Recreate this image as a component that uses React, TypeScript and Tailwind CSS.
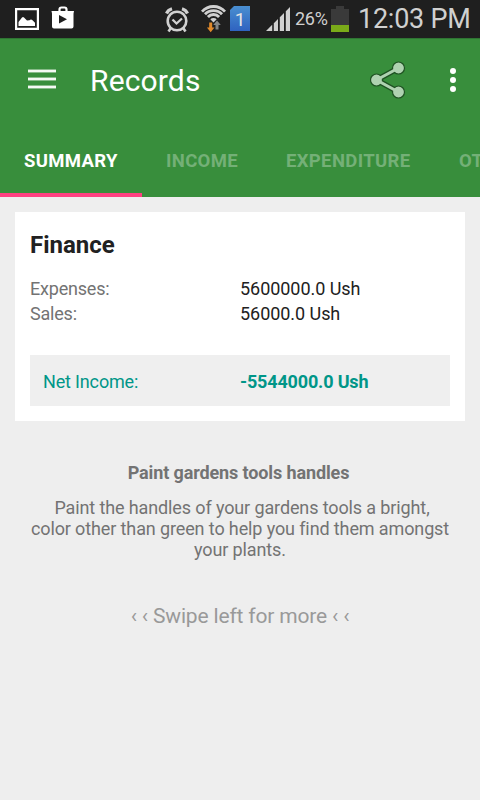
import React from 'react'
import clsx from 'clsx'

const tabs = [
    { name: 'SUMMARY', width: 'w-[142px]', current: true },
    { name: 'INCOME', width: 'w-[120px]', current: false },
    { name: 'EXPENDITURE', width: 'w-[173px]', current: false },
    { name: 'OTHER', width: 'w-[110px]', current: false },
]

const records = [
    { label: 'Expenses:', value: '5600000.0 Ush' },
    { label: 'Sales:', value: '56000.0 Ush' },
]

const StatusBar = () => {
    return (
        <div className="flex h-[38px] w-full shrink-0 items-start bg-[#1f1f1f] text-[#d0d0d0]">
            {/* notifications */}
            <svg className="mt-2 ml-[15px] shrink-0" width="24" height="22" viewBox="0 0 24 22">
                <path d="M1.1 1.1h21.8v19.8H1.1z" fill="none" stroke="#fff" strokeWidth="2.2" />
                <path d="M3.500 18v-4l3.500-4.500q1-.8 2 0l3 3 2.500-.2q1.500-1.500 3 0l2.500 2.500V18z" fill="#fff" />
            </svg>
            <svg className="mt-[5px] ml-[12px] shrink-0" width="25" height="25" viewBox="0 0 25 25">
                <path d="M8.500 7V4.500a2 2 0 0 1 2-2h3a2 2 0 0 1 2 2V7" fill="none" stroke="#fff" strokeWidth="2.200" />
                <path
                    fillRule="evenodd"
                    d="M.5 6h22.500c0 .8-.4 1.500-.5 3v12.500a2 2 0 0 1-2 2H3a2 2 0 0 1-2-2V9c0-1.500-.5-2.200-.5-3zm7.500 4v8.500l8-4.200z"
                    fill="#fff"
                />
            </svg>

            {/* alarm */}
            <svg className="mt-[7px] ml-[89px] shrink-0" width="24" height="26" viewBox="0 0 24 26">
                <g fill="none" stroke="#d0d0d0" strokeWidth="2.600">
                    <circle cx="12" cy="14" r="9.300" />
                    <path d="M7.500 12.500l4 4 5.500-5" strokeWidth="2.300" />
                    <path d="M1.500 6.500Q3 3 7 1.800M22.500 6.500Q21 3 17 1.800" strokeWidth="3.200" />
                    <path d="M5.500 21.500l-2 3M18.500 21.500l2 3" />
                </g>
            </svg>
            {/* wifi */}
            <svg className="mt-[4px] ml-[11px] shrink-0" width="27" height="29" viewBox="0 0 27 29">
                <g fill="none" stroke="#d0d0d0" strokeWidth="2.800">
                    <path d="M2 7.600a15.500 15.500 0 0 1 23 0" />
                    <path d="M5 10.300a11.500 11.500 0 0 1 17 0" />
                    <path d="M7.900 13a7.500 7.500 0 0 1 11.200 0" />
                </g>
                <path d="M10.300 15.300a4.600 4.600 0 0 1 6.400 0l-3.200 3.200z" fill="#d0d0d0" />
                <path d="M9.200 18.500h3v5h2.300l-3.800 4.700-3.800-4.700h2.300z" fill="#e0892b" />
                <path d="M15.500 25.500h3v-4.500h2.300L17 16.500 13.200 21h2.300z" fill="#858585" />
            </svg>
            <div className="mt-[6px] ml-[3px] flex h-[25px] w-5 shrink-0 items-center justify-center bg-linear-to-b from-[#4a8fd0] to-[#2f62c0] pt-[2px] text-[19px] leading-[23px] text-[#e4e4e4] [clip-path:polygon(4px_0,100%_0,100%_100%,0_100%,0_4px)]">
                1
            </div>
            <svg className="mt-[7px] ml-[16px] shrink-0" width="24" height="24" viewBox="0 0 24 24" fill="#d0d0d0">
                <path d="M0 24l6.200-6.200V24zM7.800 24v-7.800L12 12v12zM13.800 24V10.200L18 6v18zM19.800 24V4.200L24 0v24z" />
            </svg>
            <span className="mt-[7px] ml-[5px] w-[33px] shrink-0 text-[18px] leading-6 tracking-[-0.3px]">26%</span>
            <svg className="mt-[6px] ml-[3px] shrink-0" width="18" height="26" viewBox="0 0 18 26">
                <path d="M5 0h8v3h5v16H0V3h5z" fill="#3a3a3a" />
                <path d="M0 19h18v7H0z" fill="#7aaa19" />
            </svg>
            <span className="mt-[3px] ml-[9px] shrink-0 text-[27px] leading-8 tracking-[-0.25px] whitespace-nowrap">12:03 PM</span>
        </div>
    )
}

const Header = () => {
    return (
        <div className="flex h-[159px] shrink-0 flex-col bg-[#388e3c] shadow-[inset_0_1px_0_#2f7533]">
            <div className="flex h-[84px] items-center">
                <div className="mb-[2px] ml-7 flex w-7 flex-col gap-1">
                    <div className="h-1 border-y border-[#88bb8a] bg-[#f4f9f4]" />
                    <div className="h-1 border-y border-[#88bb8a] bg-[#f4f9f4]" />
                    <div className="h-1 border-y border-[#88bb8a] bg-[#f4f9f4]" />
                </div>
                <h1 className="ml-[34px] flex-1 text-[30px] tracking-[0.15px] text-white">Records</h1>
                <svg className="mr-[44px]" width="36" height="38" viewBox="0 0 36 38">
                    <path d="M28.500 7L6.500 19l22 12" fill="none" stroke="#1f5223" strokeWidth="5.500" />
                    <g fill="#afd2b1" stroke="#1f5223" strokeWidth="1.200">
                        <circle cx="28.500" cy="7" r="6" />
                        <circle cx="6.500" cy="19" r="6" />
                        <circle cx="28.500" cy="31" r="6" />
                    </g>
                    <path d="M28.500 7L6.500 19l22 12" fill="none" stroke="#afd2b1" strokeWidth="3" />
                </svg>
                <div className="mr-6 flex flex-col gap-[3px]">
                    <div className="size-1.5 rounded-full bg-white" />
                    <div className="size-1.5 rounded-full bg-white" />
                    <div className="size-1.5 rounded-full bg-white" />
                </div>
            </div>
            <div className="flex h-[75px] overflow-hidden">
                {tabs.map((tab) => (
                    <div
                        key={tab.name}
                        className={clsx(
                            'shrink-0 border-b-4 pt-[27px] pl-6 text-[18.5px] leading-6 font-bold tracking-[0.35px] whitespace-nowrap',
                            tab.width,
                            tab.current ? 'border-[#ff4081] text-white' : 'border-transparent text-[#74b077]'
                        )}
                    >
                        {tab.name}
                    </div>
                ))}
            </div>
        </div>
    )
}

const App = () => {
    return (
        <div className="flex h-[800px] w-[480px] flex-col overflow-hidden bg-[#eeeeee] font-[Roboto,sans-serif]">
            <StatusBar />
            <Header />

            <div className="mx-[15px] mt-[15px] h-[209px] bg-white px-[15px] pt-[18px]">
                <h2 className="text-[24px] leading-[30px] font-bold text-[#212121]">Finance</h2>
                <div className="mt-[16px]">
                    {records.map((record) => (
                        <div key={record.label} className="flex text-[18px] leading-[25px]">
                            <span className="w-[210px] tracking-[-0.2px] text-[#737373]">{record.label}</span>
                            <span className="tracking-[-0.05px] text-[#212121]">{record.value}</span>
                        </div>
                    ))}
                </div>
                <div className="mt-[29px] flex h-[51px] items-center bg-[#efefef] pt-[2px] pl-[13px] text-[18px] tracking-[-0.16px] text-[#009688]">
                    <span className="w-[197px]">Net Income:</span>
                    <span className="font-bold">-5544000.0 Ush</span>
                </div>
            </div>

            <div className="mt-[41px] flex flex-col items-center text-center text-[18px] leading-[21px] tracking-[-0.12px] whitespace-nowrap text-[#737373]">
                <h3 className="pr-[3px] font-bold">Paint gardens tools handles</h3>
                <p className="mt-[14px] pl-1">Paint the handles of your gardens tools a bright,</p>
                <p>color other than green to help you find them amongst</p>
                <p>your plants.</p>
                <p className="mt-[42px] text-[21px] leading-[28px] tracking-[-0.17px] text-[#999999]">‹ ‹ Swipe left for more ‹ ‹</p>
            </div>
        </div>
    )
}

export default App
